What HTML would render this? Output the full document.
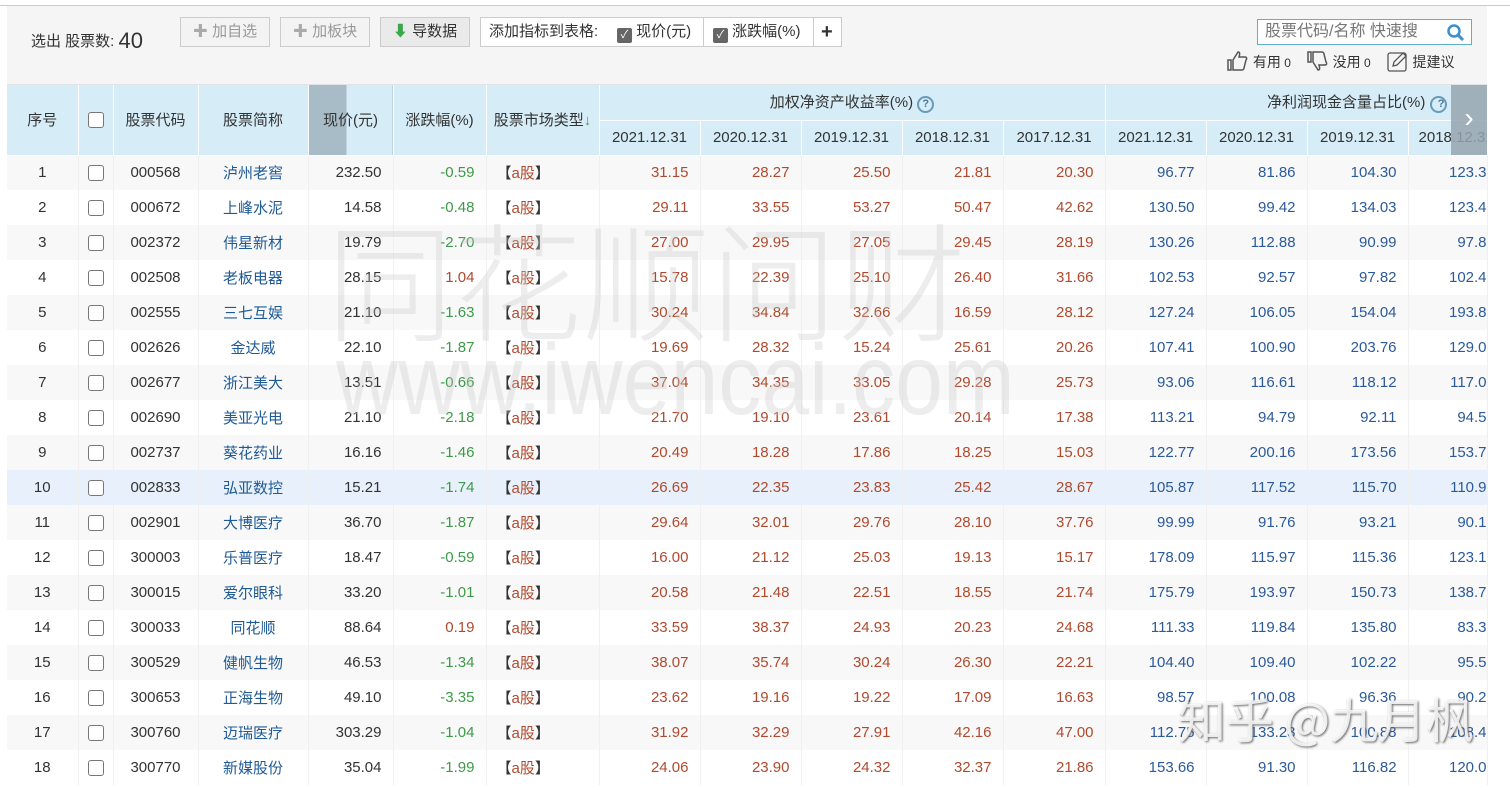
<!DOCTYPE html>
<html><head><meta charset="utf-8"><style>
*{margin:0;padding:0;box-sizing:border-box}
body{width:1510px;height:790px;overflow:hidden;background:#fff;font-family:"Liberation Sans","Noto Sans CJK SC",sans-serif;font-size:14px;color:#333;position:relative}
.topline{position:absolute;left:0;top:5px;width:1510px;height:1px;background:#ccc}
.bar{position:absolute;left:7px;top:6px;width:1480px;height:79px;background:#f5f5f5;border-bottom:1px solid #e2e2e2}
.btn{position:absolute;top:11px;height:30px;border:1px solid #ccc;background:#f3f3f3;color:#999;font-size:15px;line-height:28px;text-align:center}
table{position:absolute;left:7px;top:85px;border-collapse:collapse;table-layout:fixed;width:1480px}
td,th{height:35px;white-space:nowrap;overflow:hidden;font-weight:normal;border-right:1px solid #f0f0f0}
th{background:#d6edf8;border-right:1px solid #fff;border-bottom:1px solid #fff;font-size:15px;color:#333}
td{text-align:right;padding-right:11px;font-size:15px}
tr.o td{background:#f8f8f8}
tr.h td{background:#e8f1fb}
td.c{text-align:center;padding:0}
td.l{text-align:left;padding-left:10px}
.cb{display:inline-block;width:16px;height:16px;border:1px solid #777;border-radius:3px;vertical-align:middle;background:#fff}
.n{color:#1f5a96}
.g{color:#3d9a48}
.r{color:#b04a2e}
.b{color:#2b5a9a}
.wm1{position:absolute;left:326px;top:212px;font-size:128px;color:rgba(200,200,200,.33);letter-spacing:0px;font-family:"Noto Sans CJK SC",sans-serif;line-height:1;font-weight:300}
.wm2{position:absolute;left:336px;top:330px;font-size:100px;color:rgba(200,200,200,.33);font-family:"Liberation Sans",sans-serif;line-height:1;transform:scaleX(0.86);transform-origin:0 0}
.zh{position:absolute;left:1178px;top:693px;font-size:48px;color:rgba(255,255,255,.85);text-shadow:1px 1px 2px #666;font-family:"Noto Sans CJK SC",sans-serif;line-height:1}
.ck{display:inline-block;width:15px;height:15px;background:#666;border-radius:2px;color:#fff;font-size:11px;line-height:15px;text-align:center;vertical-align:-2px}
</style></head><body>
<div class="topline"></div>
<div class="bar">
<div style="position:absolute;left:24px;top:20px;font-size:15px;color:#333">选出 股票数: <span style="font-size:22px;position:relative;top:2px">40</span></div>
<div class="btn" style="left:173px;width:90px"><b style="color:#aaa">✚</b> 加自选</div>
<div class="btn" style="left:273px;width:90px"><b style="color:#aaa">✚</b> 加板块</div>
<div class="btn" style="left:373px;width:90px;color:#333;background:#eaeaea"><span style="color:#3aa84a">⬇</span> 导数据</div>
<div style="position:absolute;left:473px;top:11px;height:30px;width:362px;border:1px solid #ccc;background:#fff;font-size:15px;line-height:28px">
<span style="position:absolute;left:8px">添加指标到表格:</span>
<span style="position:absolute;left:136px"><span class="ck">✓</span> 现价(元)</span>
<span style="position:absolute;left:222px;top:0;width:1px;height:28px;background:#ccc"></span>
<span style="position:absolute;left:232px"><span class="ck">✓</span> 涨跌幅(%)</span>
<span style="position:absolute;left:332px;top:0;width:1px;height:28px;background:#ccc"></span>
<span style="position:absolute;left:340px;font-size:20px;font-weight:bold">+</span>
</div>
<div style="position:absolute;left:1250px;top:13px;width:215px;height:26px;border:1px solid #5fb0cf;background:#fff;color:#777;font-size:16px;line-height:24px;padding-left:7px">股票代码/名称 快速搜
<svg style="position:absolute;right:5px;top:3px" width="20" height="20" viewBox="0 0 20 20"><circle cx="8" cy="8" r="5.5" fill="none" stroke="#3a8fd0" stroke-width="2.5"/><path d="M12 12l5 5" stroke="#3a8fd0" stroke-width="3"/></svg></div>
<div style="position:absolute;left:1220px;top:44px;font-size:14px;color:#333;line-height:22px">
<svg width="22" height="22" viewBox="0 0 22 22" style="vertical-align:-5px"><path d="M1 10h3v10H1zM6 10l5-8c2 0 2 2 1 5h6c2 0 2 2 1 3l-2 8c0 1-1 2-2 2H6z" fill="none" stroke="#555" stroke-width="1.5"/></svg> 有用<span style="font-size:12px"> 0</span>
<svg width="22" height="22" viewBox="0 0 22 22" style="vertical-align:-5px;margin-left:12px"><path d="M1 2h3v10H1zM6 12l5 8c2 0 2-2 1-5h6c2 0 2-2 1-3l-2-8c0-1-1-2-2-2H6z" fill="none" stroke="#555" stroke-width="1.5"/></svg> 没用<span style="font-size:12px"> 0</span>
<svg width="22" height="22" viewBox="0 0 22 22" style="vertical-align:-5px;margin-left:12px"><rect x="1" y="3" width="18" height="18" rx="2" fill="none" stroke="#555" stroke-width="1.3"/><path d="M6 16l1-4 9-9 3 3-9 9z" fill="none" stroke="#555" stroke-width="1.3"/></svg> 提建议
</div>
</div>
<table>
<colgroup><col style="width:71px"><col style="width:35px"><col style="width:85px"><col style="width:110px"><col style="width:85px"><col style="width:93px"><col style="width:113px"><col style="width:101px"><col style="width:101px"><col style="width:101px"><col style="width:101px"><col style="width:102px"><col style="width:101px"><col style="width:101px"><col style="width:101px"><col style="width:79px"></colgroup>
<tr><th rowspan="2">序号</th><th rowspan="2"><span class="cb"></span></th><th rowspan="2">股票代码</th><th rowspan="2">股票简称</th><th rowspan="2" style="background:linear-gradient(90deg,#a8bcc7 0,#a8bcc7 38px,#d6edf8 38px)">现价(元)</th><th rowspan="2">涨跌幅(%)</th><th rowspan="2">股票市场类型<span style="color:#3aa84a">↓</span></th>
<th colspan="5">加权净资产收益率(%) <span style="display:inline-block;width:17px;height:17px;border:2px solid #6a9ab8;border-radius:50%;font-size:11px;line-height:13px;color:#4a7a98;font-weight:bold">?</span></th>
<th colspan="4" style="text-align:right;padding-right:40px;position:relative">净利润现金含量占比(%) <span style="display:inline-block;width:17px;height:17px;border:2px solid #6a9ab8;border-radius:50%;font-size:11px;line-height:13px;color:#4a7a98;font-weight:bold">?</span></th></tr>
<tr><th>2021.12.31</th><th>2020.12.31</th><th>2019.12.31</th><th>2018.12.31</th><th>2017.12.31</th><th>2021.12.31</th><th>2020.12.31</th><th>2019.12.31</th><th style="text-align:left;padding-left:10px">2018.12.31</th></tr>
<tr class="o"><td class="c">1</td><td class="c"><span class="cb"></span></td><td class="c">000568</td><td class="c n">泸州老窖</td><td>232.50</td><td class="g">-0.59</td><td class="l">【<span class="r">a股</span>】</td><td class="r">31.15</td><td class="r">28.27</td><td class="r">25.50</td><td class="r">21.81</td><td class="r">20.30</td><td class="b">96.77</td><td class="b">81.86</td><td class="b">104.30</td><td class="b" style="padding-right:0">123.3</td></tr>
<tr><td class="c">2</td><td class="c"><span class="cb"></span></td><td class="c">000672</td><td class="c n">上峰水泥</td><td>14.58</td><td class="g">-0.48</td><td class="l">【<span class="r">a股</span>】</td><td class="r">29.11</td><td class="r">33.55</td><td class="r">53.27</td><td class="r">50.47</td><td class="r">42.62</td><td class="b">130.50</td><td class="b">99.42</td><td class="b">134.03</td><td class="b" style="padding-right:0">123.4</td></tr>
<tr class="o"><td class="c">3</td><td class="c"><span class="cb"></span></td><td class="c">002372</td><td class="c n">伟星新材</td><td>19.79</td><td class="g">-2.70</td><td class="l">【<span class="r">a股</span>】</td><td class="r">27.00</td><td class="r">29.95</td><td class="r">27.05</td><td class="r">29.45</td><td class="r">28.19</td><td class="b">130.26</td><td class="b">112.88</td><td class="b">90.99</td><td class="b" style="padding-right:0">97.8</td></tr>
<tr><td class="c">4</td><td class="c"><span class="cb"></span></td><td class="c">002508</td><td class="c n">老板电器</td><td>28.15</td><td class="r">1.04</td><td class="l">【<span class="r">a股</span>】</td><td class="r">15.78</td><td class="r">22.39</td><td class="r">25.10</td><td class="r">26.40</td><td class="r">31.66</td><td class="b">102.53</td><td class="b">92.57</td><td class="b">97.82</td><td class="b" style="padding-right:0">102.4</td></tr>
<tr class="o"><td class="c">5</td><td class="c"><span class="cb"></span></td><td class="c">002555</td><td class="c n">三七互娱</td><td>21.10</td><td class="g">-1.63</td><td class="l">【<span class="r">a股</span>】</td><td class="r">30.24</td><td class="r">34.84</td><td class="r">32.66</td><td class="r">16.59</td><td class="r">28.12</td><td class="b">127.24</td><td class="b">106.05</td><td class="b">154.04</td><td class="b" style="padding-right:0">193.8</td></tr>
<tr><td class="c">6</td><td class="c"><span class="cb"></span></td><td class="c">002626</td><td class="c n">金达威</td><td>22.10</td><td class="g">-1.87</td><td class="l">【<span class="r">a股</span>】</td><td class="r">19.69</td><td class="r">28.32</td><td class="r">15.24</td><td class="r">25.61</td><td class="r">20.26</td><td class="b">107.41</td><td class="b">100.90</td><td class="b">203.76</td><td class="b" style="padding-right:0">129.0</td></tr>
<tr class="o"><td class="c">7</td><td class="c"><span class="cb"></span></td><td class="c">002677</td><td class="c n">浙江美大</td><td>13.51</td><td class="g">-0.66</td><td class="l">【<span class="r">a股</span>】</td><td class="r">37.04</td><td class="r">34.35</td><td class="r">33.05</td><td class="r">29.28</td><td class="r">25.73</td><td class="b">93.06</td><td class="b">116.61</td><td class="b">118.12</td><td class="b" style="padding-right:0">117.0</td></tr>
<tr><td class="c">8</td><td class="c"><span class="cb"></span></td><td class="c">002690</td><td class="c n">美亚光电</td><td>21.10</td><td class="g">-2.18</td><td class="l">【<span class="r">a股</span>】</td><td class="r">21.70</td><td class="r">19.10</td><td class="r">23.61</td><td class="r">20.14</td><td class="r">17.38</td><td class="b">113.21</td><td class="b">94.79</td><td class="b">92.11</td><td class="b" style="padding-right:0">94.5</td></tr>
<tr class="o"><td class="c">9</td><td class="c"><span class="cb"></span></td><td class="c">002737</td><td class="c n">葵花药业</td><td>16.16</td><td class="g">-1.46</td><td class="l">【<span class="r">a股</span>】</td><td class="r">20.49</td><td class="r">18.28</td><td class="r">17.86</td><td class="r">18.25</td><td class="r">15.03</td><td class="b">122.77</td><td class="b">200.16</td><td class="b">173.56</td><td class="b" style="padding-right:0">153.7</td></tr>
<tr class="h"><td class="c">10</td><td class="c"><span class="cb"></span></td><td class="c">002833</td><td class="c n">弘亚数控</td><td>15.21</td><td class="g">-1.74</td><td class="l">【<span class="r">a股</span>】</td><td class="r">26.69</td><td class="r">22.35</td><td class="r">23.83</td><td class="r">25.42</td><td class="r">28.67</td><td class="b">105.87</td><td class="b">117.52</td><td class="b">115.70</td><td class="b" style="padding-right:0">110.9</td></tr>
<tr class="o"><td class="c">11</td><td class="c"><span class="cb"></span></td><td class="c">002901</td><td class="c n">大博医疗</td><td>36.70</td><td class="g">-1.87</td><td class="l">【<span class="r">a股</span>】</td><td class="r">29.64</td><td class="r">32.01</td><td class="r">29.76</td><td class="r">28.10</td><td class="r">37.76</td><td class="b">99.99</td><td class="b">91.76</td><td class="b">93.21</td><td class="b" style="padding-right:0">90.1</td></tr>
<tr><td class="c">12</td><td class="c"><span class="cb"></span></td><td class="c">300003</td><td class="c n">乐普医疗</td><td>18.47</td><td class="g">-0.59</td><td class="l">【<span class="r">a股</span>】</td><td class="r">16.00</td><td class="r">21.12</td><td class="r">25.03</td><td class="r">19.13</td><td class="r">15.17</td><td class="b">178.09</td><td class="b">115.97</td><td class="b">115.36</td><td class="b" style="padding-right:0">123.1</td></tr>
<tr class="o"><td class="c">13</td><td class="c"><span class="cb"></span></td><td class="c">300015</td><td class="c n">爱尔眼科</td><td>33.20</td><td class="g">-1.01</td><td class="l">【<span class="r">a股</span>】</td><td class="r">20.58</td><td class="r">21.48</td><td class="r">22.51</td><td class="r">18.55</td><td class="r">21.74</td><td class="b">175.79</td><td class="b">193.97</td><td class="b">150.73</td><td class="b" style="padding-right:0">138.7</td></tr>
<tr><td class="c">14</td><td class="c"><span class="cb"></span></td><td class="c">300033</td><td class="c n">同花顺</td><td>88.64</td><td class="r">0.19</td><td class="l">【<span class="r">a股</span>】</td><td class="r">33.59</td><td class="r">38.37</td><td class="r">24.93</td><td class="r">20.23</td><td class="r">24.68</td><td class="b">111.33</td><td class="b">119.84</td><td class="b">135.80</td><td class="b" style="padding-right:0">83.3</td></tr>
<tr class="o"><td class="c">15</td><td class="c"><span class="cb"></span></td><td class="c">300529</td><td class="c n">健帆生物</td><td>46.53</td><td class="g">-1.34</td><td class="l">【<span class="r">a股</span>】</td><td class="r">38.07</td><td class="r">35.74</td><td class="r">30.24</td><td class="r">26.30</td><td class="r">22.21</td><td class="b">104.40</td><td class="b">109.40</td><td class="b">102.22</td><td class="b" style="padding-right:0">95.5</td></tr>
<tr><td class="c">16</td><td class="c"><span class="cb"></span></td><td class="c">300653</td><td class="c n">正海生物</td><td>49.10</td><td class="g">-3.35</td><td class="l">【<span class="r">a股</span>】</td><td class="r">23.62</td><td class="r">19.16</td><td class="r">19.22</td><td class="r">17.09</td><td class="r">16.63</td><td class="b">98.57</td><td class="b">100.08</td><td class="b">96.36</td><td class="b" style="padding-right:0">90.2</td></tr>
<tr class="o"><td class="c">17</td><td class="c"><span class="cb"></span></td><td class="c">300760</td><td class="c n">迈瑞医疗</td><td>303.29</td><td class="g">-1.04</td><td class="l">【<span class="r">a股</span>】</td><td class="r">31.92</td><td class="r">32.29</td><td class="r">27.91</td><td class="r">42.16</td><td class="r">47.00</td><td class="b">112.75</td><td class="b">133.23</td><td class="b">100.88</td><td class="b" style="padding-right:0">108.4</td></tr>
<tr><td class="c">18</td><td class="c"><span class="cb"></span></td><td class="c">300770</td><td class="c n">新媒股份</td><td>35.04</td><td class="g">-1.99</td><td class="l">【<span class="r">a股</span>】</td><td class="r">24.06</td><td class="r">23.90</td><td class="r">24.32</td><td class="r">32.37</td><td class="r">21.86</td><td class="b">153.66</td><td class="b">91.30</td><td class="b">116.82</td><td class="b" style="padding-right:0">120.0</td></tr>
</table>
<div style="position:absolute;left:1451px;top:85px;width:36px;height:70px;background:rgba(150,165,175,.85);color:#fff;font-size:28px;line-height:66px;text-align:center">›</div>
<div class="wm1">同花顺问财</div>
<div class="wm2">www.iwencai.com</div>
<div class="zh">知乎 @九月枫</div>
</body></html>
